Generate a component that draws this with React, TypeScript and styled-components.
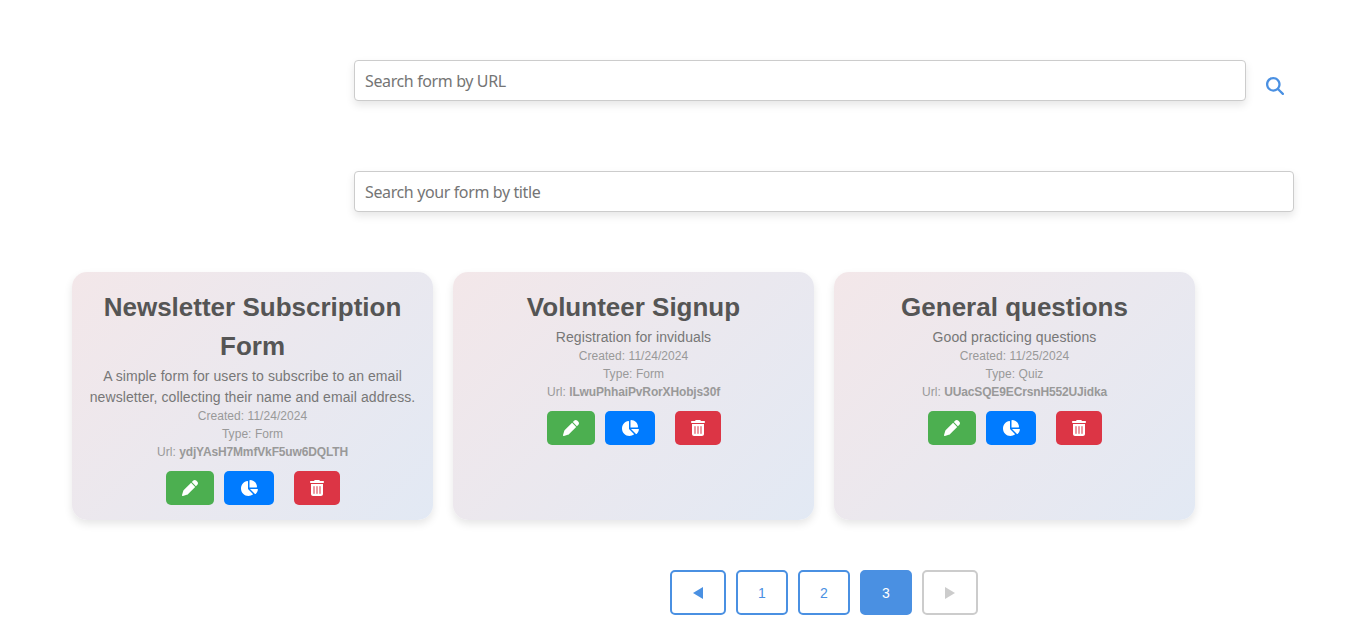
import React from 'react';
import styled, { createGlobalStyle } from 'styled-components';
import { FaChartPie, FaMagnifyingGlass, FaPen, FaTrashCan } from 'react-icons/fa6';

const GlobalStyle = createGlobalStyle`
  *, *::before, *::after { box-sizing: border-box; }
  body {
    margin: 0;
    background: #fff;
    font-family: "Liberation Sans", Arial, sans-serif;
    overflow: hidden;
  }
`;

const Page = styled.main`
  display: flex;
  flex-direction: column;
  height: 632px;
  padding: 60px 65px 0 72px;
`;

const SearchRow = styled.div`
  display: flex;
  align-items: flex-start;
  height: 41px;
  margin: 0 0 70px 282px;
`;

const SearchInput = styled.input`
  flex: 1;
  min-width: 0;
  height: 41px;
  padding: 10px;
  border: 1px solid #ccc;
  border-radius: 4px;
  background: #fff;
  box-shadow: 0 4px 8px rgba(0, 0, 0, 0.1);
  font-family: "Noto Sans", sans-serif;
  font-size: 16px;
  letter-spacing: -0.38px;
  outline: none;

  &::placeholder { color: #757575; opacity: 1; }
`;

const SearchButton = styled.button`
  display: flex;
  width: 48px;
  padding: 17px 0 0 20px;
  border: 0;
  background: none;
  color: #4a90e2;
  font-size: 18px;
`;

const Cards = styled.section`
  display: grid;
  grid-template-columns: repeat(3, 361px);
  gap: 20px;
  height: 248px;
  margin-top: -10px;
`;

const Card = styled.article`
  padding: 16px 15px 15px;
  border-radius: 15px;
  background: linear-gradient(135deg, #f3e7e9, #e2e9f4);
  box-shadow: 0 4px 8px rgba(0, 0, 0, 0.1);
  text-align: center;
`;

const Title = styled.h2`
  margin: 0;
  color: #555;
  font-size: 26px;
  line-height: 39px;
  font-weight: 700;
`;

const Description = styled.p`
  margin: 0 0 -1px;
  color: #777;
  font-size: 14px;
  line-height: 21px;
  letter-spacing: 0.08px;
`;

const Meta = styled.p`
  margin: 0;
  color: #999;
  font-size: 12px;
  line-height: 18px;
  letter-spacing: 0.05px;

  strong { letter-spacing: -0.14px; }
`;

const Actions = styled.div`
  display: flex;
  justify-content: center;
  gap: 10px;
  margin: 10px 0 0 1px;
`;

const ActionButton = styled.button<{ $color: string; $width: number; $apart?: boolean }>`
  display: flex;
  align-items: center;
  justify-content: center;
  width: ${({ $width }) => $width}px;
  height: 34px;
  margin-left: ${({ $apart }) => ($apart ? '10px' : '0')};
  padding: 0;
  border: 0;
  border-radius: 5px;
  background: ${({ $color }) => $color};
  color: #fff;
  font-size: 16px;
`;

const Pagination = styled.nav`
  display: flex;
  gap: 10px;
  margin: 50px 0 0 598px;
`;

const PageButton = styled.button<{ $active?: boolean; $arrow?: boolean }>`
  display: flex;
  align-items: center;
  justify-content: center;
  width: ${({ $arrow }) => ($arrow ? 56 : 52)}px;
  height: 45px;
  padding: 0;
  border: 2px solid #4a90e2;
  border-radius: 5px;
  background: ${({ $active }) => ($active ? '#4a90e2' : '#fff')};
  color: ${({ $active }) => ($active ? '#fff' : '#4a90e2')};
  font-family: inherit;
  font-size: 14px;

  &:disabled { border-color: #ccc; color: #ccc; }
`;

const Arrow = styled.svg`
  display: block;
  width: 10px;
  height: 12px;
  margin-top: 1px;
  fill: currentColor;
`;

const forms = [
  {
    title: 'Newsletter Subscription Form',
    description: 'A simple form for users to subscribe to an email newsletter, collecting their name and email address.',
    created: '11/24/2024',
    type: 'Form',
    url: 'ydjYAsH7MmfVkF5uw6DQLTH',
  },
  {
    title: 'Volunteer Signup',
    description: 'Registration for inviduals',
    created: '11/24/2024',
    type: 'Form',
    url: 'lLwuPhhaiPvRorXHobjs30f',
  },
  {
    title: 'General questions',
    description: 'Good practicing questions',
    created: '11/25/2024',
    type: 'Quiz',
    url: 'UUacSQE9ECrsnH552UJidka',
  },
];

export default function App() {
  return (
    <>
      <GlobalStyle />
      <Page>
        <SearchRow>
          <SearchInput placeholder="Search form by URL" />
          <SearchButton aria-label="Search"><FaMagnifyingGlass /></SearchButton>
        </SearchRow>
        <SearchRow>
          <SearchInput placeholder="Search your form by title" />
        </SearchRow>
        <Cards>
          {forms.map((form) => (
            <Card key={form.url}>
              <Title>{form.title}</Title>
              <Description>{form.description}</Description>
              <Meta>Created: {form.created}</Meta>
              <Meta>Type: {form.type}</Meta>
              <Meta>Url: <strong>{form.url}</strong></Meta>
              <Actions>
                <ActionButton $color="#4caf50" $width={48} aria-label="Edit"><FaPen /></ActionButton>
                <ActionButton $color="#007bff" $width={50} aria-label="Statistics"><FaChartPie size={18} /></ActionButton>
                <ActionButton $color="#dc3545" $width={46} $apart aria-label="Delete"><FaTrashCan /></ActionButton>
              </Actions>
            </Card>
          ))}
        </Cards>
        <Pagination>
          <PageButton $arrow aria-label="Previous"><Arrow viewBox="0 0 10 12"><path d="M10 0v12L0 6z" /></Arrow></PageButton>
          <PageButton>1</PageButton>
          <PageButton>2</PageButton>
          <PageButton $active>3</PageButton>
          <PageButton $arrow disabled aria-label="Next"><Arrow viewBox="0 0 10 12"><path d="M0 0v12l10-6z" /></Arrow></PageButton>
        </Pagination>
      </Page>
    </>
  );
}
